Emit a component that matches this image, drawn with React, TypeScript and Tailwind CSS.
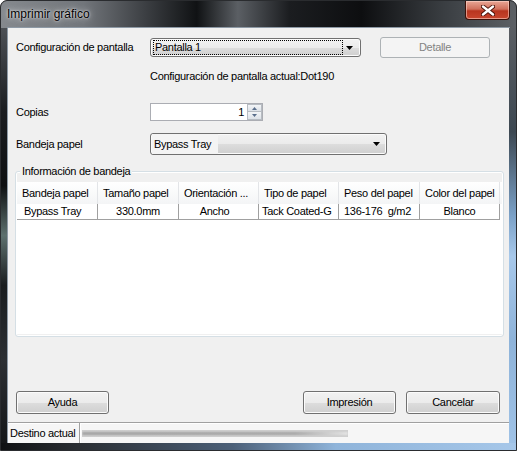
import React from "react";

const btn =
  "flex items-center rounded-[3px] border border-[#707070] bg-[linear-gradient(#f2f2f2_0%,#ebebeb_50%,#dddddd_50%,#cfcfcf_100%)] shadow-[inset_0_0_0_1px_#fbfbfb] text-[11px] text-black";

function Arrow() {
  return (
    <svg width="7" height="4" viewBox="0 0 7 4" className="shrink-0">
      <path d="M0 0H7L3.5 4Z" fill="#000" />
    </svg>
  );
}

const headers = [
  { label: "Bandeja papel", w: "w-[81px]" },
  { label: "Tamaño papel", w: "w-[81px]" },
  { label: "Orientación ...", w: "w-[80px]" },
  { label: "Tipo de papel", w: "w-[80px]" },
  { label: "Peso del papel", w: "w-[81px]" },
  { label: "Color del papel", w: "w-[80px]" },
];

export default function App() {
  return (
    <div className="font-['Liberation_Sans',Arial,sans-serif] tracking-[-0.3px] w-[517px] h-[451px] flex flex-col overflow-hidden rounded-t-[7px] border border-[#2a2c2f] bg-[#1c1e21] text-black">
      {/* title bar */}
      <div className="h-[27px] shrink-0 flex items-start justify-between bg-[linear-gradient(90deg,#85898e_0%,#72767b_16%,#3c3f43_28%,#101214_38%,#5b5f64_46%,#1b1d20_56%,#0d0e10_70%,#3a3e42_86%,#5c6065_100%)]">
        <span className="tracking-normal pl-[6px] pt-[6px] text-[12px] leading-[15px] [text-shadow:0_0_6px_rgba(255,255,255,0.85),0_0_2px_rgba(255,255,255,0.9)]">
          Imprimir gráfico
        </span>
        <div className="mr-[6px] flex h-[19px] w-[45px] items-center justify-center rounded-b-[4px] border border-t-0 border-[#3b1109] bg-[linear-gradient(#e9a796_0%,#d0705c_45%,#b8351f_55%,#c8462e_100%)] shadow-[inset_0_0_0_1px_rgba(255,220,210,0.55)]">
          <svg width="14" height="11" viewBox="0 0 14 11">
            <path d="M2 1.5L12 9.5M12 1.5L2 9.5" stroke="#4a1208" strokeWidth="4.2" strokeLinecap="round" />
            <path d="M2 1.5L12 9.5M12 1.5L2 9.5" stroke="#fff" strokeWidth="2.4" strokeLinecap="round" />
          </svg>
        </div>
      </div>

      <div className="flex h-[415px] shrink-0">
        <div className="w-[7px] bg-[linear-gradient(#4c5055_0%,#1b1d20_20%,#0e1012_38%,#5d706e_50%,#1a1d1f_62%,#2c2f33_80%,#151719_100%)]" />

        {/* client area */}
        <div className="w-[501px] h-[415px] flex flex-col bg-[#f0f0f0] shadow-[0_0_0_1px_#8d99a5]">
          {/* row 1 */}
          <div className="mt-[9px] h-[21px] flex items-center pl-[8px]">
            <span className="w-[134px] text-[11px]">Configuración de pantalla</span>
            <div className={`${btn} w-[211px] h-[19px] justify-between pl-[2px] pr-[7px]`}>
              <span className="flex h-[15px] w-[190px] items-center border border-dotted border-black pl-[1px] text-[11px]">
                Pantalla 1
              </span>
              <Arrow />
            </div>
            <div className="ml-[19px] flex h-[21px] w-[110px] items-center justify-center rounded-[3px] border border-[#adb2b5] bg-[#f4f4f4] text-[11px] text-[#838383]">
              Detalle
            </div>
          </div>

          {/* row 2 */}
          <div className="mt-[11px] h-[14px] pl-[142px] text-[11px] leading-[14px]">
            Configuración de pantalla actual:Dot190
          </div>

          {/* row 3 */}
          <div className="mt-[20px] h-[18px] flex items-center pl-[8px]">
            <span className="w-[134px] text-[11px]">Copias</span>
            <div className="flex h-[18px] w-[113px] border border-[#abadb3] bg-white">
              <span className="flex-1 pr-[3px] text-right text-[11px] leading-[16px]">1</span>
              <div className="flex w-[15px] flex-col">
                <div className="flex h-[8px] items-center justify-center border border-[#b7bcc2] bg-[linear-gradient(#f3f5f7,#dde2e8)]">
                  <svg width="5" height="3" viewBox="0 0 5 3">
                    <path d="M0 3H5L2.5 0Z" fill="#5a6f8c" />
                  </svg>
                </div>
                <div className="flex h-[8px] items-center justify-center border border-t-0 border-[#b7bcc2] bg-[linear-gradient(#f3f5f7,#dde2e8)]">
                  <svg width="5" height="3" viewBox="0 0 5 3">
                    <path d="M0 0H5L2.5 3Z" fill="#5a6f8c" />
                  </svg>
                </div>
              </div>
            </div>
          </div>

          {/* row 4 */}
          <div className="mt-[12px] h-[22px] flex items-center pl-[8px]">
            <span className="w-[134px] text-[11px]">Bandeja papel</span>
            <div className={`${btn} w-[237px] h-[22px] justify-between pl-[1px] pr-[6px]`}>
              <span className="flex h-[20px] w-[66px] items-center bg-[#f4f4f4] pl-[2px] text-[11px]">
                Bypass Tray
              </span>
              <Arrow />
            </div>
          </div>

          {/* group box */}
          <div className="relative mt-[16px] ml-[7px] h-[166px] w-[489px] rounded-[3px] border border-[#d5dfe5] shadow-[inset_0_0_0_1px_#ffffff] px-[1px] pt-[10px] pb-[2px]">
            <span className="absolute left-[4px] top-[-8px] bg-[#f0f0f0] px-[2px] text-[11px] leading-[14px]">
              Información de bandeja
            </span>
            <div className="h-full w-full bg-white">
              <div className="flex h-[22px] bg-[linear-gradient(#ffffff,#f4f5f6)]">
                {headers.map((h) => (
                  <div
                    key={h.label}
                    className={`${h.w} flex items-center border-r border-[#e3e5e8] pl-[5px] text-[11px] whitespace-nowrap`}
                  >
                    {h.label}
                  </div>
                ))}
              </div>
              <div className="flex h-[16px] w-[483px] border-b border-[#a0a0a0] text-[11px] leading-[15px]">
                <div className="w-[81px] border-r border-[#a0a0a0] pl-[7px]">Bypass Tray</div>
                <div className="w-[81px] border-r border-[#a0a0a0] text-center">330.0mm</div>
                <div className="w-[80px] border-r border-[#a0a0a0] pr-[8px] text-center">Ancho</div>
                <div className="w-[80px] border-r border-[#a0a0a0] pl-[3px]">Tack Coated-G</div>
                <div className="w-[81px] border-r border-[#a0a0a0] pl-[5px] whitespace-pre">136-176  g/m2</div>
                <div className="w-[80px] border-r border-[#a0a0a0] text-center">Blanco</div>
              </div>
            </div>
          </div>

          {/* buttons */}
          <div className="mt-[54px] h-[23px] flex pl-[8px] pr-[9px]">
            <div className={`${btn} justify-center w-[93px] h-[23px]`}>Ayuda</div>
            <div className="flex-1" />
            <div className={`${btn} justify-center w-[93px] h-[23px]`}>Impresión</div>
            <div className={`${btn} justify-center ml-[10px] w-[94px] h-[23px]`}>Cancelar</div>
          </div>

          {/* status bar */}
          <div className="mt-[8px] h-[21px] flex items-center border-t border-[#a0a0a0] bg-[#f6f6f6] shadow-[inset_0_1px_0_#ffffff]">
            <span className="flex h-full items-center border-r border-[#a0a0a0] pl-[2px] pr-[3px] text-[11px] shadow-[1px_0_0_#ffffff]">
              Destino actual
            </span>
            <div className="ml-[2px] h-[7px] w-[266px] bg-[linear-gradient(90deg,#a4a4a4_0%,#a8a8a8_80%,#e6e6e6_100%)] shadow-[inset_0_2px_2px_#cfcfcf,inset_0_-2px_2px_#cfcfcf]" />
          </div>
        </div>

        <div className="w-[7px] bg-[linear-gradient(#5a5e63_0%,#3d4852_25%,#7aa0c6_45%,#a7c8ea_55%,#8eb3d9_75%,#9fc2e6_100%)]" />
      </div>

      <div className="flex-1 bg-[linear-gradient(90deg,#0f1113_0%,#2a2e33_15%,#4c6078_45%,#8fb4da_65%,#a6c7e9_100%)]" />
    </div>
  );
}
